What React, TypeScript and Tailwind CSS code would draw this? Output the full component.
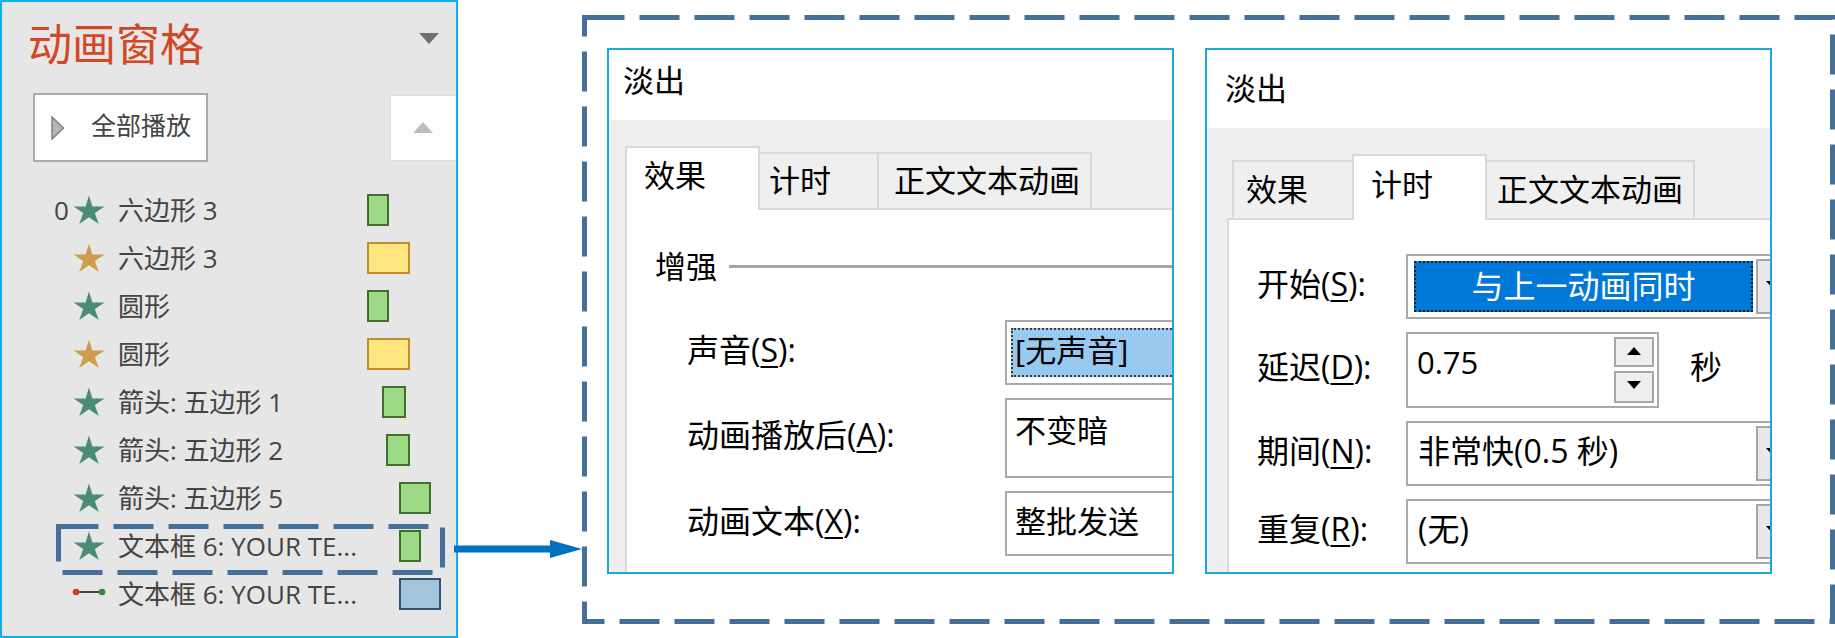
import { useState } from "react";
import type { ReactNode } from "react";

type Effect = {
  id: number;
  order?: string;
  kind: "enter" | "emphasis" | "motion";
  name: string;
  start: number;
  length: number;
  selected?: boolean;
};

// start and length are the pixels of the timeline bar
const effects: Effect[] = [
  { id: 1, order: "0", kind: "enter", name: "六边形 3", start: 0, length: 22 },
  { id: 2, kind: "emphasis", name: "六边形 3", start: 0, length: 43 },
  { id: 3, kind: "enter", name: "圆形", start: 0, length: 22 },
  { id: 4, kind: "emphasis", name: "圆形", start: 0, length: 43 },
  { id: 5, kind: "enter", name: "箭头: 五边形 1", start: 15, length: 24 },
  { id: 6, kind: "enter", name: "箭头: 五边形 2", start: 19, length: 24 },
  { id: 7, kind: "enter", name: "箭头: 五边形 5", start: 32, length: 32 },
  { id: 8, kind: "enter", name: "文本框 6: YOUR TE...", start: 32, length: 22, selected: true },
  { id: 9, kind: "motion", name: "文本框 6: YOUR TE...", start: 32, length: 42 },
];

const barColors = {
  enter: "border-[#3f6f2b] bg-[#9dda86]",
  emphasis: "border-[#c58a2a] bg-[#ffe680]",
  motion: "border-[#2f5573] bg-[#a3c7da]",
};

const Triangle = ({ points, className }: { points: string; className: string }) => (
  <svg className={className} viewBox="0 0 20 10" preserveAspectRatio="none" aria-hidden="true">
    <polygon points={points} fill="currentColor" />
  </svg>
);

const DashedFrame = ({ className }: { className: string }) => (
  <svg className={className} aria-hidden="true">
    <rect
      x="2.5"
      y="2.5"
      className="h-[calc(100%-5px)] w-[calc(100%-5px)]"
      fill="none"
      stroke="#446f99"
      strokeWidth="5"
      strokeDasharray="40 15"
    />
  </svg>
);

const EffectIcon = ({ kind }: { kind: Effect["kind"] }) => {
  if (kind === "motion") {
    return (
      <svg className="h-[30px] w-[34px]" viewBox="0 0 34 30" aria-hidden="true">
        <line x1="4" y1="13" x2="30" y2="13" stroke="#444" strokeWidth="2" />
        <circle cx="4" cy="13" r="3.3" fill="#c8401f" />
        <circle cx="30" cy="13" r="3.3" fill="#37883a" />
      </svg>
    );
  }
  return (
    <svg className="h-[30px] w-[34px]" viewBox="0 0 34 30" aria-hidden="true">
      <polygon
        points="17,0.5 20.4,11.5 32.5,11.5 22.8,18 26.8,29 17,22.3 7.2,29 11.2,18 1.5,11.5 13.6,11.5"
        fill={kind === "enter" ? "#4a8c75" : "#cf9c4b"}
      />
    </svg>
  );
};

const AnimationPane = () => (
  <aside className="w-[458px] shrink-0 border-2 border-[#0caeec] bg-[#e6e6e6] pb-[18px] text-[25px] text-[#444]">
    <header className="flex h-[91px] items-start justify-between pl-[26px] pr-[17px]">
      <h1 className="mt-[10px] text-[44px] leading-[64px] text-[#d24726]">动画窗格</h1>
      <button type="button" aria-label="选项" className="mt-[31px]">
        <Triangle points="0,0 20,0 10,10" className="h-[11px] w-5 text-[#707070]" />
      </button>
    </header>
    <div className="flex items-center justify-between pl-[31px]">
      <button
        type="button"
        className="flex h-[69px] w-[175px] items-center border-2 border-[#ababab] bg-[#fdfdfd] pl-4"
      >
        <svg className="mr-[26px] h-6 w-[14px]" viewBox="0 0 14 24" aria-hidden="true">
          <polygon points="1,1 12.5,12 1,23" fill="#b5b5b5" stroke="#808080" strokeWidth="1.5" />
        </svg>
        <span className="pb-1">全部播放</span>
      </button>
      <button
        type="button"
        aria-label="上移"
        className="flex h-[66px] w-[66px] items-center border border-r-0 border-[#dedede] bg-[#fdfdfd] pl-[22px]"
      >
        <Triangle points="0,10 20,10 10,0" className="h-[11px] w-5 text-[#bdbdbd]" />
      </button>
    </div>
    <ul className="mt-6 text-[26px]">
      {effects.map((effect) => (
        <li key={effect.id} className="relative flex h-12 items-center pl-[50px]">
          <span className="w-5 pl-[2px]">{effect.order}</span>
          <EffectIcon kind={effect.kind} />
          <span className="ml-3 w-[249px] whitespace-nowrap">{effect.name}</span>
          <span
            className={`h-8 border-2 ${barColors[effect.kind]}`}
            style={{ marginLeft: effect.start, width: effect.length }}
          />
          {effect.selected && (
            <DashedFrame className="absolute left-[54px] top-[2px] h-[51px] w-[389px]" />
          )}
        </li>
      ))}
    </ul>
  </aside>
);

const Dialog = ({ title, children }: { title: ReactNode; children: ReactNode }) => (
  <section className="flex flex-1 flex-col overflow-hidden border-2 border-[#1ba9dd] bg-[#efefef]">
    {title}
    {children}
  </section>
);

const Tab = ({
  active,
  className,
  children,
}: {
  active?: boolean;
  className: string;
  children: ReactNode;
}) => (
  <button
    type="button"
    role="tab"
    aria-selected={!!active}
    className={`shrink-0 whitespace-nowrap border-[#d9d9d9] text-left ${
      active ? "border-x-2 border-t-2 bg-white pb-2 pl-[17px]" : "mt-[6px] border-y-2 pb-[2px]"
    } ${className}`}
  >
    {children}
  </button>
);

const Label = ({
  htmlFor,
  text,
  hotkey,
  className,
}: {
  htmlFor: string;
  text: string;
  hotkey: string;
  className: string;
}) => (
  <label htmlFor={htmlFor} className={`shrink-0 whitespace-nowrap pb-[6px] text-[32px] ${className}`}>
    {text}(<u className="decoration-2 underline-offset-4">{hotkey}</u>):
  </label>
);

const DropArrow = () => (
  <span className="my-[3px] flex w-[14px] shrink-0 items-center overflow-hidden border-2 border-r-0 border-[#a6a6a6] bg-[#e8e8e8] pb-1 pl-2">
    <Triangle points="0,0 20,0 10,10" className="h-2 w-[14px] shrink-0 text-black" />
  </span>
);

const EffectDialog = () => (
  <Dialog title={<h2 className="flex h-[70px] items-center bg-white pb-[10px] pl-[14px]">淡出</h2>}>
    <div role="tablist" className="flex h-[90px] pl-4 pt-[26px]">
      <Tab active className="w-[135px]">
        效果
      </Tab>
      <Tab className="w-[119px] border-r-2 pl-[9px]">计时</Tab>
      <Tab className="w-[213px] border-r-2 pl-[15px]">正文文本动画</Tab>
      <div className="flex-1 border-b-2 border-[#d9d9d9]" />
    </div>
    <div className="ml-4 flex-1 border-l-2 border-[#d9d9d9] bg-white pb-4 pt-9">
      <div className="flex items-center gap-3 pl-7 leading-10">
        <h3>增强</h3>
        <div className="h-[3px] flex-1 bg-[#a5a5a5]" />
      </div>
      <div className="mt-[34px] flex flex-col gap-[13px] pl-[60px]">
        <div className="flex items-center">
          <Label htmlFor="sound" text="声音" hotkey="S" className="w-[318px]" />
          <div className="flex h-[65px] min-w-0 flex-1 border-2 border-r-0 border-[#a9a9ae] py-[6px] pl-1">
            <select
              id="sound"
              className="min-w-0 flex-1 appearance-none border-2 border-r-0 border-dotted border-[#3a3a3a] bg-[#99c9ef] pb-[6px] pl-[2px]"
            >
              <option>[无声音]</option>
            </select>
          </div>
        </div>
        <div className="flex items-center">
          <Label htmlFor="after" text="动画播放后" hotkey="A" className="w-[318px]" />
          <select
            id="after"
            className="h-20 min-w-0 flex-1 appearance-none border-2 border-r-0 border-[#a9a9ae] bg-white pb-4 pl-2"
          >
            <option>不变暗</option>
          </select>
        </div>
        <div className="flex items-center">
          <Label htmlFor="text" text="动画文本" hotkey="X" className="w-[318px]" />
          <select
            id="text"
            className="h-[65px] min-w-0 flex-1 appearance-none border-2 border-r-0 border-[#a9a9ae] bg-white pb-[6px] pl-2"
          >
            <option>整批发送</option>
          </select>
        </div>
      </div>
    </div>
  </Dialog>
);

const TimingDialog = () => {
  const [delay, setDelay] = useState("0.75");

  const step = (amount: number) => {
    setDelay(Math.max(0, Number(delay) + amount).toFixed(2));
  };

  return (
    <Dialog title={<h2 className="flex h-[78px] items-center bg-white pb-[2px] pl-[18px]">淡出</h2>}>
      <div role="tablist" className="flex h-[92px] pl-5 pt-[26px]">
        <div className="w-[5px] border-b-2 border-[#d9d9d9]" />
        <Tab className="w-[120px] border-l-2 pl-3">效果</Tab>
        <Tab active className="w-[135px]">
          计时
        </Tab>
        <Tab className="w-[208px] border-r-2 pl-[10px]">正文文本动画</Tab>
        <div className="flex-1 border-b-2 border-[#d9d9d9]" />
      </div>
      <div className="ml-5 flex flex-1 flex-col gap-[13px] border-l-2 border-[#d9d9d9] bg-white pb-2 pl-7 pt-[34px]">
        <div className="flex items-center">
          <Label htmlFor="start" text="开始" hotkey="S" className="w-[149px]" />
          <div className="flex h-[65px] min-w-0 flex-1 border-2 border-r-0 border-[#a9a9ae]">
            <select
              id="start"
              className="my-[5px] ml-[6px] mr-[3px] min-w-0 flex-1 appearance-none border-2 border-dotted border-[#2a1a0a] bg-[#0078d7] pb-[2px] text-center text-[32px] text-white [text-align-last:center]"
            >
              <option>与上一动画同时</option>
            </select>
            <DropArrow />
          </div>
        </div>
        <div className="flex items-center">
          <Label htmlFor="delay" text="延迟" hotkey="D" className="w-[149px]" />
          <div className="flex h-[76px] w-[253px] border-2 border-[#a9a9ae] p-[3px]">
            <input
              id="delay"
              type="text"
              inputMode="decimal"
              value={delay}
              onChange={(e) => setDelay(e.target.value)}
              className="min-w-0 flex-1 pb-4 pl-[6px] outline-none"
            />
            <div className="flex w-10 flex-col gap-1">
              <button
                type="button"
                aria-label="增加"
                onClick={() => step(0.25)}
                className="flex flex-1 items-center justify-center border-2 border-[#a6a6a6] bg-[#efefef] pb-[2px]"
              >
                <Triangle points="0,10 20,10 10,0" className="h-2 w-[14px] text-black" />
              </button>
              <button
                type="button"
                aria-label="减少"
                onClick={() => step(-0.25)}
                className="flex flex-1 items-center justify-center border-2 border-[#a6a6a6] bg-[#efefef] pb-1"
              >
                <Triangle points="0,0 20,0 10,10" className="h-2 w-[14px] text-black" />
              </button>
            </div>
          </div>
          <span className="ml-[31px] pb-[6px] text-[32px]">秒</span>
        </div>
        <div className="flex items-center">
          <Label htmlFor="duration" text="期间" hotkey="N" className="w-[149px]" />
          <div className="flex h-[65px] min-w-0 flex-1 border-2 border-r-0 border-[#a9a9ae]">
            <select
              id="duration"
              className="min-w-0 flex-1 appearance-none bg-white pb-[6px] pl-[10px] text-[32px]"
            >
              <option>非常快(0.5 秒)</option>
            </select>
            <DropArrow />
          </div>
        </div>
        <div className="flex items-center">
          <Label htmlFor="repeat" text="重复" hotkey="R" className="w-[149px]" />
          <div className="flex h-[65px] min-w-0 flex-1 border-2 border-r-0 border-[#a9a9ae]">
            <select
              id="repeat"
              className="min-w-0 flex-1 appearance-none bg-white pb-[6px] pl-[10px] text-[32px]"
            >
              <option>(无)</option>
            </select>
            <DropArrow />
          </div>
        </div>
      </div>
    </Dialog>
  );
};

const App = () => {
  return (
    <main className="flex items-start bg-white font-['Open_Sans','Noto_Sans_CJK_SC',sans-serif]">
      <AnimationPane />
      <svg
        className="z-10 -ml-1 mt-[540px] h-[18px] w-32 shrink-0"
        viewBox="0 0 128 18"
        aria-hidden="true"
      >
        <path d="M0 5.5H96V0L128 9L96 18V12.5H0Z" fill="#0070c0" />
      </svg>
      <div className="relative mt-[15px] flex min-w-0 flex-1 gap-[31px] pb-[50px] pl-[25px] pr-[63px] pt-[33px] text-[31px] leading-10 text-black">
        <DashedFrame className="absolute left-0 top-0 h-full w-full" />
        <EffectDialog />
        <TimingDialog />
      </div>
    </main>
  );
};

export default App;
